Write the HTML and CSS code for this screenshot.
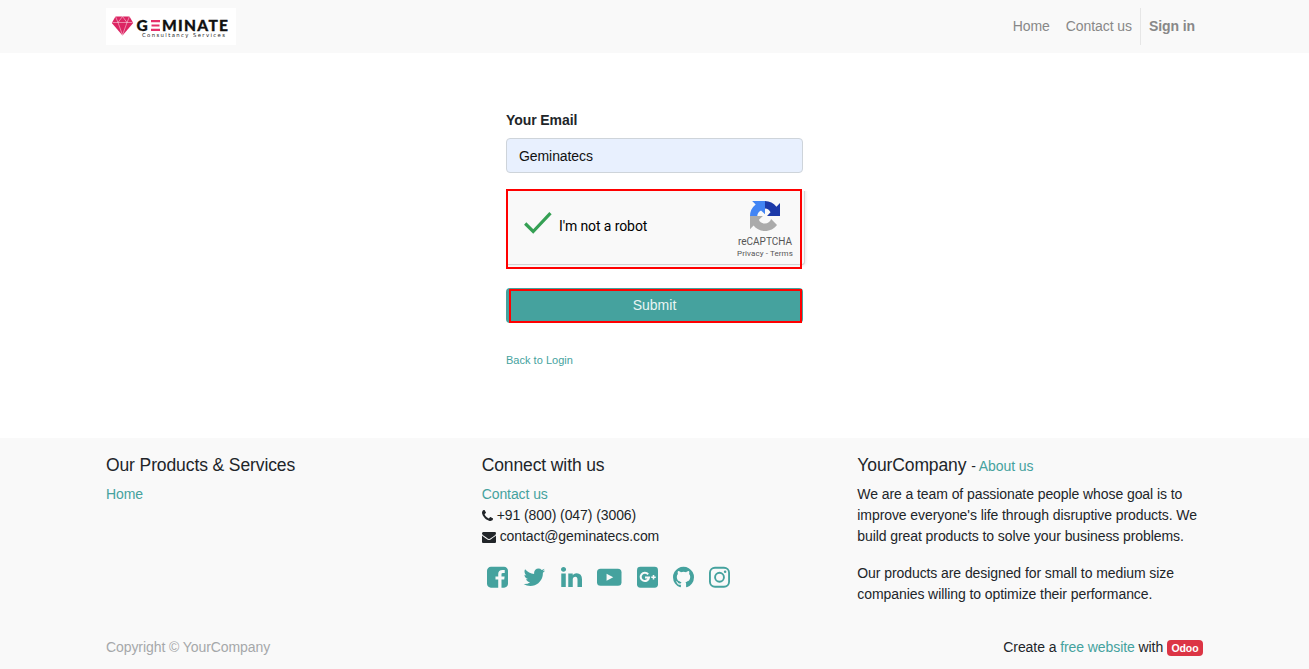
FILE: index.html
```html
<!DOCTYPE html>
<html lang="en">
<head>
<meta charset="utf-8">
<title>Reset password</title>
<link rel="stylesheet" href="styles.css">
</head>
<body>
<header class="navbar">
  <div class="container navbar-inner">
    <a class="brand" href="#">
      <svg width="130" height="37" viewBox="0 0 130 37">
        <path fill="#dc2563" d="M9.500 8.500h14l3.700 6.500L16.500 27.500 5.800 15z"/>
        <path fill="none" stroke="#fff" stroke-opacity=".75" stroke-width=".6" d="M6.500 14.500h20M9.500 8.500l2.500 6 4.500-6 4.500 6 2.500-6M12 14.500l4.500 12.500 4.500-12.500"/>
        <text class="logo-name" x="30.500" y="23">G</text>
        <path fill="#e5306b" d="M45 12h9v2.300h-9zM45.500 16.400h8v2.200h-8zM45 20.700h9V23h-9z"/>
        <text class="logo-name" x="56" y="23" textLength="66">MINATE</text>
        <text class="logo-sub" x="36" y="29.300" textLength="83">Consultancy Services</text>
      </svg>
    </a>
    <nav class="menu">
      <a href="#">Home</a>
      <a href="#">Contact us</a>
      <a class="signin" href="#">Sign in</a>
    </nav>
  </div>
</header>

<main>
  <form class="reset-form">
    <label for="email">Your Email</label>
    <input id="email" class="field" type="text" value="Geminatecs">
    <div class="captcha-frame">
      <div class="captcha">
        <svg class="check" width="30" height="24" viewBox="0 0 30 24"><path d="M2.200 12.500l8 8L27.500 2.200" fill="none" stroke="#35a054" stroke-width="3.200"/></svg>
        <span class="captcha-text">I'm not a robot</span>
        <div class="captcha-brand">
          <svg width="30" height="30" viewBox="0 0 64 64">
            <path fill="#1c3aa9" d="M64 32V4.500l-7.600 7.600A32 32 0 0 0 32 0v15l-.2.800c6 .4 9.500 3 12 8L36.300 32z"/>
            <path fill="#4285f4" d="M32 0H4.500l7.600 7.600A32 32 0 0 0 0 32h15.500c.4-6 3-9.500 8-12L32 28.500z"/>
            <path fill="#ababab" d="M0 32v28l7.600-7.600C13.500 60 22 64 32 64c10.500 0 19.800-5 25.600-12.900L45.100 38.500c-2.500 6-7 9.500-13.100 9.500-7 0-11-3-13-8l8.500-8z"/>
          </svg>
          <span class="captcha-name">reCAPTCHA</span>
          <span class="captcha-links">Privacy - Terms</span>
        </div>
      </div>
    </div>
    <button class="submit" type="button">Submit</button>
    <a class="back" href="#">Back to Login</a>
  </form>
</main>

<footer>
  <div class="container">
    <div class="columns">
      <section>
        <h4>Our Products &amp; Services</h4>
        <a href="#">Home</a>
      </section>
      <section>
        <h4>Connect with us</h4>
        <a href="#">Contact us</a>
        <div class="contact"><svg width="11" height="14" viewBox="192 0 1408 1792"><path d="M1600 1240q0 27-10 70.500t-21 68.500q-21 50-122 106-94 51-186 51-27 0-53-3.500t-57.500-12.500-47-14.500-55.500-20.500-49-18q-98-35-175-83-127-79-264-216t-216-264q-48-77-83-175-3-9-18-49t-20.500-55.500-14.500-47-12.500-57.500-3.500-53q0-92 51-186 56-101 106-122 25-11 68.500-21t70.500-10q14 0 21 3 18 6 53 76 11 19 30 54t35 63.500 31 53.500q3 4 17.500 25t21.500 35.500 7 28.500q0 20-28.500 50t-62 55-62 53-28.500 46q0 9 5 22.500t8.500 20.500 14 24 11.500 19q76 137 174 235t235 174q2 1 19 11.500t24 14 20.500 8.500 22.500 5q18 0 46-28.500t53-62 55-62 50-28.500q14 0 28.500 7t35.500 21.500 25 17.500q25 15 53.500 31t63.500 35 54 30q70 35 76 53 3 7 3 21z"/></svg><span>+91 (800) (047) (3006)</span></div>
        <div class="contact"><svg width="14" height="14" viewBox="0 0 1792 1792"><path d="M1792 710v794q0 66-47 113t-113 47h-1472q-66 0-113-47t-47-113v-794q44 49 101 87 362 246 497 345 57 42 92.500 65.500t94.500 48 110 24.500h2q51 0 110-24.500t94.500-48 92.500-65.500q170-123 498-345 57-39 100-87zm0-294q0 79-49 151t-122 123q-376 261-468 325-10 7-42.500 31t-54 38.500-52 32.500-57.500 27-50 9h-2q-23 0-50-9t-57.500-27-52-32.500-54-38.500-42.500-31q-91-64-262-182.500t-205-142.500q-62-42-117-115.500t-55-136.500q0-78 41.500-130t118.500-52h1472q65 0 112.500 47t47.500 113z"/></svg><span>contact@geminatecs.com</span></div>
        <div class="social">
          <svg width="21" height="24.500" viewBox="128 0 1536 1792"><path d="M1376 128q119 0 203.500 84.500t84.500 203.500v960q0 119-84.500 203.500t-203.500 84.500h-188v-595h199l30-232h-229v-148q0-56 23.500-84t91.500-28l122-1v-207q-63-9-178-9-136 0-217.500 80t-81.500 226v171h-200v232h200v595h-532q-119 0-203.500-84.500t-84.500-203.500v-960q0-119 84.500-203.500t203.500-84.500h960z"/></svg>
          <svg width="22.700" height="24.500" viewBox="64 0 1664 1792"><path d="M1684 408q-67 98-162 167 1 14 1 42 0 130-38 259.500t-115.500 248.500-184.500 210.500-258 146-323 54.500q-271 0-496-145 35 4 78 4 225 0 401-138-105-2-188-64.500t-114-159.500q33 5 61 5 43 0 85-11-112-23-185.500-111.500t-73.500-205.500v-4q68 38 146 41-66-44-105-115t-39-154q0-88 44-163 121 149 294.500 238.500t371.500 99.500q-8-38-8-74 0-134 94.500-228.500t228.500-94.500q140 0 236 102 109-21 205-78-37 115-142 178 93-10 186-50z"/></svg>
          <svg width="21" height="24.500" viewBox="128 0 1536 1792"><path d="M477 625v991h-330v-991h330zm21-306q1 73-50.500 122t-135.500 49h-2q-82 0-132-49t-50-122q0-74 51.500-122.500t134.500-48.500 133 48.500 51 122.500zm1166 729v568h-329v-530q0-105-40.500-164.500t-126.500-59.500q-63 0-105.500 34.500t-63.500 85.500q-11 30-11 81v553h-329q2-399 2-647t-1-296l-1-48h329v144h-2q20-32 41-56t56.500-52 87-43.500 114.500-15.500q171 0 275 113.500t104 332.500z"/></svg>
          <svg width="24.500" height="24.500" viewBox="0 0 1792 1792"><rect y="270" width="1792" height="1252" rx="260"/><path fill="#f9f9f9" d="M700 640v512l490-256z"/></svg>
          <svg width="21" height="24.500" viewBox="128 0 1536 1792"><rect x="128" y="128" width="1536" height="1536" rx="250"/><path fill="none" stroke="#f9f9f9" stroke-width="150" d="M945 680A305 305 0 1 0 1005 915H715"/><path fill="none" stroke="#f9f9f9" stroke-width="115" d="M1170 895h330M1335 730v330"/></svg>
          <svg width="21" height="24.500" viewBox="128 0 1536 1792"><path d="M896 128q209 0 385.500 103t279.500 279.500 103 385.500q0 251-146.500 451.500t-378.500 277.500q-27 5-40-7t-13-30q0-3 .5-76.500t.5-134.500q0-97-52-142 57-6 102.500-18t94-39 81-66.500 53-105 20.500-150.500q0-119-79-206 37-91-8-204-28-9-81 11t-92 44l-38 24q-93-26-192-26t-192 26q-16-11-42.500-27t-83.500-38.500-85-13.500q-45 113-8 204-79 87-79 206 0 85 20.500 150t52.500 105 80.500 67 94 39 102.500 18q-39 36-49 103-21 10-45 15t-57 5-65.500-21.500-55.500-62.500q-19-32-48.500-52t-49.500-24l-20-3q-21 0-29 4.500t-5 11.500 9 14 13 12l7 5q22 10 43.500 38t31.500 51l10 23q13 38 44 61.500t67 30 69.500 7 55.500-3.500l23-4q0 38 .5 88.500t.5 54.500q0 18-13 30t-40 7q-232-77-378.500-277.500t-146.500-451.500q0-209 103-385.500t279.500-279.500 385.500-103z"/></svg>
          <svg width="21" height="24.500" viewBox="128 0 1536 1792"><rect x="197" y="197" width="1398" height="1398" rx="370" fill="none" stroke="#45a29e" stroke-width="138"/><circle cx="896" cy="896" r="325" fill="none" stroke="#45a29e" stroke-width="138"/><circle cx="1306" cy="486" r="92"/></svg>
        </div>
      </section>
      <section>
        <h4>YourCompany <small>- <a href="#">About us</a></small></h4>
        <p>We are a team of passionate people whose goal is to improve everyone's life through disruptive products. We build great products to solve your business problems.</p>
        <p>Our products are designed for small to medium size companies willing to optimize their performance.</p>
      </section>
    </div>
    <div class="bottom">
      <span class="copyright">Copyright © YourCompany</span>
      <span>Create a <a href="#">free website</a> with <span class="badge">Odoo</span></span>
    </div>
  </div>
</footer>
</body>
</html>
```

FILE: styles.css
```css
* { box-sizing: border-box; }
body {
  margin: 0;
  min-height: 669px;
  display: flex;
  flex-direction: column;
  background: #fff;
  color: #212529;
  font: 14px/21px "Liberation Sans", Arial, sans-serif;
  letter-spacing: -.08px;
}
a { color: #45a29e; text-decoration: none; }
svg { display: block; }
.container { width: 1127px; margin: 0 auto; padding: 0 15px; }

.navbar { height: 53px; background: #f9f9f9; }
.navbar-inner { display: flex; justify-content: space-between; padding-top: 8px; }
.brand { width: 130px; height: 37px; background: #fff; }
.logo-name { font: 900 15.5px Lato, sans-serif; fill: #111; stroke: #111; stroke-width: .3px; letter-spacing: 0; }
.logo-sub { font: 5.3px "DejaVu Sans", sans-serif; fill: #222; letter-spacing: 0; }
.menu { display: flex; }
.menu a { height: 37px; padding: 8px; color: #888; }
.menu .signin { border-left: 1px solid #e6e6e6; font-weight: bold; }

main { height: 385px; padding-top: 57px; }
.reset-form { width: 297px; margin: 0 auto; display: flex; flex-direction: column; }
.reset-form label { font-weight: bold; margin-bottom: 7px; }
.field {
  height: 35px;
  padding: 6px 12px;
  border: 1px solid #ced4da;
  border-radius: 4px;
  background: #e8f0fe;
  color: #111;
  font: inherit;
  letter-spacing: inherit;
}
.captcha-frame {
  width: 296px;
  height: 80px;
  margin-top: 16px;
  position: relative;
  border: 2px solid #f00;
}
.captcha-frame::after {
  content: "";
  position: absolute;
  inset: -2px;
  border: 2px solid #f00;
}
.captcha {
  width: 297px;
  height: 74px;
  display: flex;
  align-items: flex-start;
  background: #f9f9f9;
  border-bottom: 1px solid #d3d3d3;
  border-right: 1px solid #d3d3d3;
  border-radius: 0 0 3px 0;
  box-shadow: 0 0 3px 1px rgba(0, 0, 0, .08);
  clip-path: inset(0 -3px -2px 0);
}
.check { margin: 20px 0 0 15px; }
.captcha-text { margin: 25px 0 0 6px; color: #000; font: 14px/20px Roboto, sans-serif; letter-spacing: -.1px; white-space: nowrap; }
.captcha-brand {
  width: 70px;
  margin: 10px 4px 0 auto;
  display: flex;
  flex-direction: column;
  align-items: center;
  color: #555;
  font-family: Roboto, sans-serif;
  letter-spacing: 0;
}
.captcha-name { margin-top: 4px; font-size: 10px; line-height: 13px; }
.captcha-links { font-size: 8px; line-height: 11px; letter-spacing: .1px; white-space: nowrap; }
.submit {
  height: 35px;
  margin-top: 19px;
  padding: 0;
  border: 0;
  border-radius: 4px;
  background: #45a29e;
  color: #e9f5f4;
  font: inherit;
  position: relative;
}
.submit::after {
  content: "";
  position: absolute;
  inset: 1px 1px 0 3px;
  border: 2px solid #f00;
}
.back { margin-top: 29px; font-size: 11px; line-height: 16px; letter-spacing: .02px; }

footer { flex: 1; background: #f9f9f9; }
.columns { display: grid; grid-template-columns: repeat(3, 345.67px); gap: 30px; padding-top: 17px; height: 199px; }
h4 { height: 21px; margin: 0 0 8px; font-size: 17.5px; line-height: 21px; font-weight: normal; letter-spacing: -.11px; }
h4 small { font-size: 14px; line-height: 1; letter-spacing: -.08px; }
p { margin: 0 0 16px; }
.contact { display: flex; align-items: center; gap: 4px; }
.contact svg { fill: #212529; }
.contact span { white-space: nowrap; }
.social { display: flex; gap: 15.2px; margin: 18px 0 0 5.5px; fill: #45a29e; }
.bottom { display: flex; justify-content: space-between; }
.copyright { color: #a6a8aa; }
.badge {
  display: inline-block;
  padding: 3px 4.5px 2px;
  border-radius: 4px;
  background: #dc3545;
  color: #fff;
  font-weight: bold;
  font-size: 10.5px;
  line-height: 11px;
}
```
